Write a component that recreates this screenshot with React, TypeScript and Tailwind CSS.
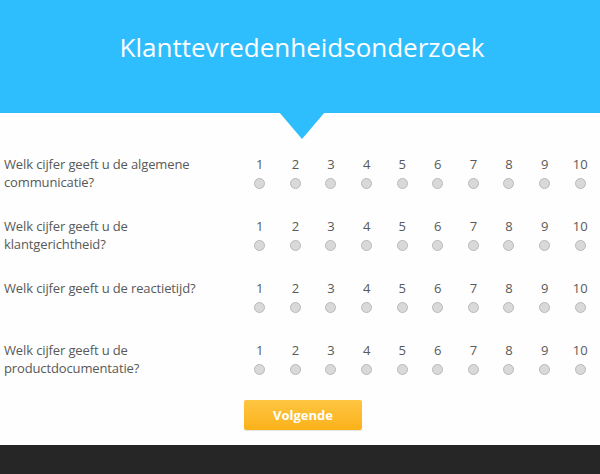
import React from "react";

const questions: string[][] = [
  ["Welk cijfer geeft u de algemene", "communicatie?"],
  ["Welk cijfer geeft u de", "klantgerichtheid?"],
  ["Welk cijfer geeft u de reactietijd?"],
  ["Welk cijfer geeft u de", "productdocumentatie?"],
];

const nums = [1, 2, 3, 4, 5, 6, 7, 8, 9, 10];

export default function App() {
  return (
    <div
      className="w-[600px] h-[474px] bg-[#fdfefd] flex flex-col overflow-hidden"
      style={{ fontFamily: '"Open Sans", "Noto Sans", sans-serif' }}
    >
      <div className="relative h-[113px] bg-[#2ebefe] flex justify-center shrink-0">
        <h1 className="pt-[29px] pl-[4px] text-[26px] leading-[36px] text-white font-normal">
          Klanttevredenheidsonderzoek
        </h1>
        <div className="absolute left-[279px] top-[112px] w-0 h-0 border-l-[23px] border-r-[23px] border-t-[27px] border-l-transparent border-r-transparent border-t-[#2ebefe]" />
      </div>

      <div className="flex flex-col gap-[26px] pt-[42px]">
        {questions.map((q, i) => (
          <div key={i} className="flex h-[36px]">
            <div className="w-[242px] pl-[4px] text-[13px] leading-[18px] text-[#595959] tracking-[-0.13px]">
              {q.map((l, j) => (
                <div key={j}>{l}</div>
              ))}
            </div>
            <div className="grid grid-cols-10 w-[356px]">
              {nums.map((n) => (
                <div key={n} className="flex flex-col items-center">
                  <span className="text-[13px] leading-[18px] text-[#595959]">{n}</span>
                  <span className="mt-[5px] w-[11px] h-[11px] rounded-full bg-[#d9d9d9] border border-[#b9b9b9]" />
                </div>
              ))}
            </div>
          </div>
        ))}
      </div>

      <div className="flex justify-center pt-[23px] pl-[6px]">
        <button className="w-[118px] h-[30px] rounded-[2px] bg-gradient-to-b from-[#fec540] to-[#fbb217] text-white text-[13px] font-bold leading-[30px] shadow-[0_1px_1px_rgba(0,0,0,0.1)]">
          Volgende
        </button>
      </div>

      <div className="mt-auto h-[29px] bg-[#262626] shrink-0" />
    </div>
  );
}
